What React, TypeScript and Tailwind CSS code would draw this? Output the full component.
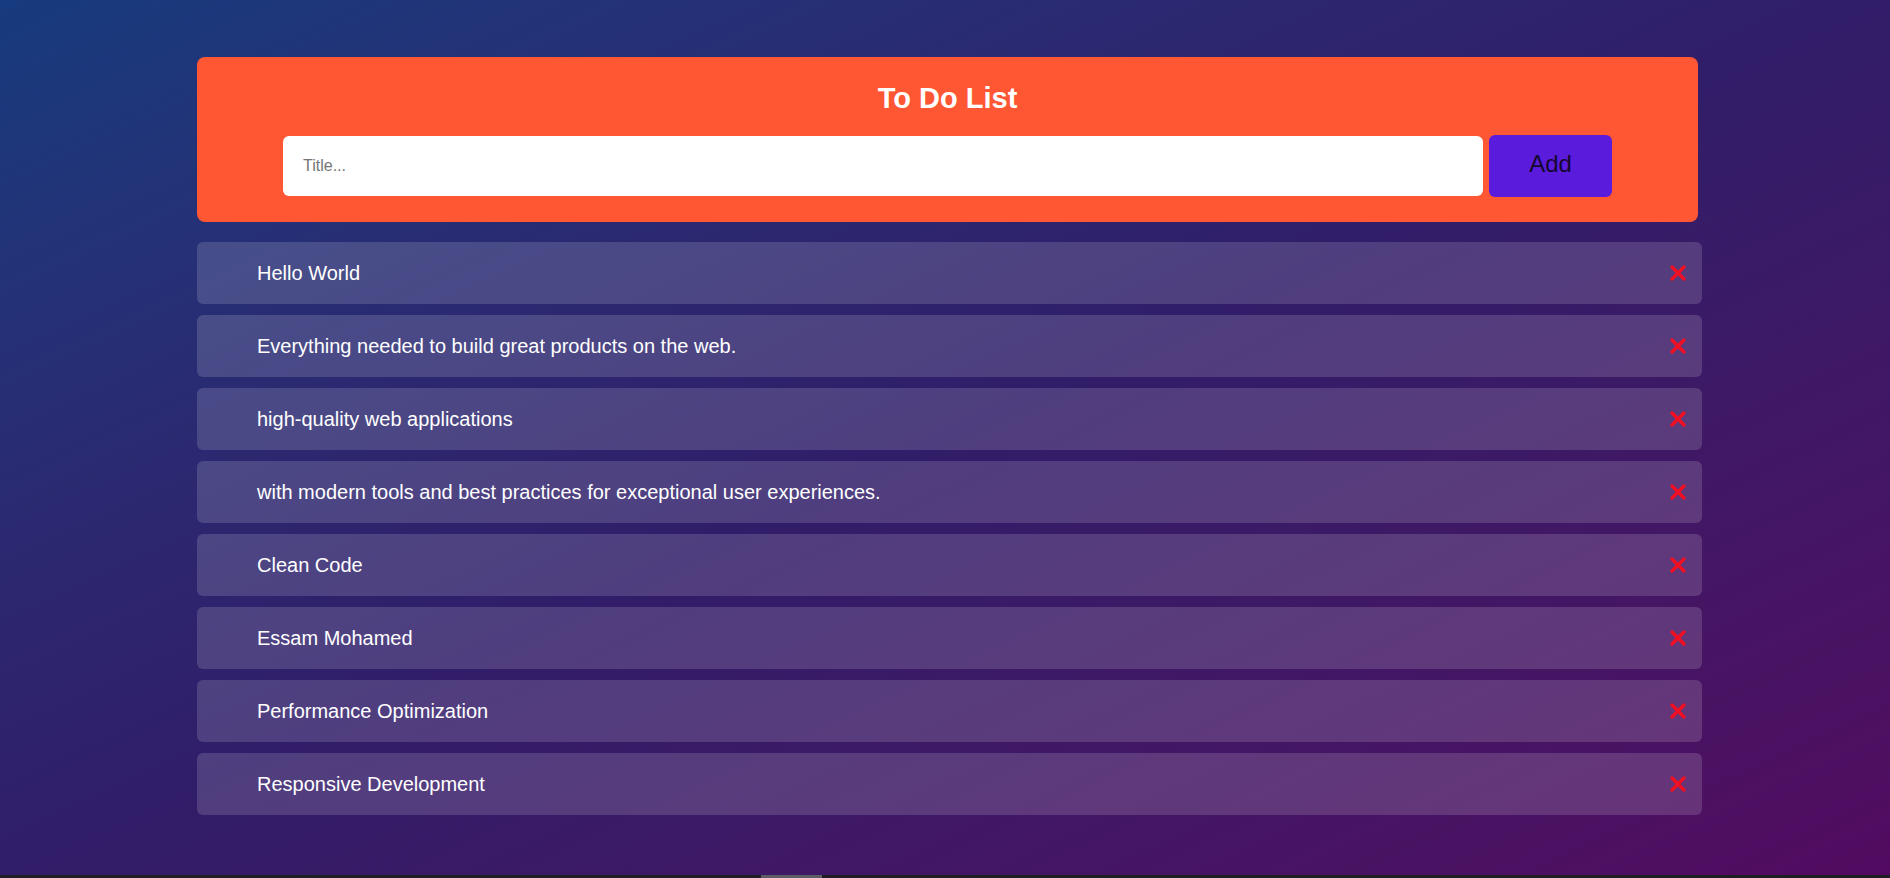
import { useState } from 'react'

const initialTodos = [
  'Hello World',
  'Everything needed to build great products on the web.',
  'high-quality web applications',
  'with modern tools and best practices for exceptional user experiences.',
  'Clean Code',
  'Essam Mohamed',
  'Performance Optimization',
  'Responsive Development',
]

function CloseIcon() {
  return (
    <svg width="18" height="18" viewBox="0 0 18 18" className="text-[#f20f24]">
      <path d="M3 3 L15 15 M15 3 L3 15" stroke="currentColor" strokeWidth="3.4" strokeLinecap="round" />
    </svg>
  )
}

export default function App() {
  const [todos, setTodos] = useState<string[]>(initialTodos)
  const [title, setTitle] = useState('')

  const addTodo = () => {
    if (!title.trim()) return
    setTodos([...todos, title.trim()])
    setTitle('')
  }

  return (
    <div
      className="h-screen flex flex-col overflow-hidden bg-linear-to-br from-[#163b7e] via-[#311d69] to-[#520a60] text-white"
      style={{ fontFamily: '"Liberation Sans", Arial, sans-serif' }}
    >
      <div className="flex-1 pt-[57px] pl-[197px] pr-[192px]">
        <div className="w-[1501px] h-[165px] rounded-[8px] bg-[#ff5733] flex flex-col items-center pt-[24px]">
          <h1 className="text-[29px] leading-[34px] font-bold text-white">To Do List</h1>
          <div className="mt-[20px] flex items-center gap-[6px]">
            <input
              value={title}
              onChange={(e) => setTitle(e.target.value)}
              placeholder="Title..."
              className="w-[1200px] h-[60px] rounded-[6px] bg-white px-[20px] text-[16px] text-black placeholder:text-[#757575] outline-none"
            />
            <button
              onClick={addTodo}
              className="w-[123px] h-[62px] rounded-[6px] bg-[#5a1bdd] pb-[4px] text-[24px] text-[#14082e]"
            >
              Add
            </button>
          </div>
        </div>

        <ul className="mt-[20px] w-[1505px] flex flex-col gap-[11px]">
          {todos.map((todo, i) => (
            <li
              key={i}
              className="h-[62px] rounded-[6px] bg-white/15 flex items-center justify-between pl-[60px] pr-[15px]"
            >
              <span className="text-[20px] text-white">{todo}</span>
              <button onClick={() => setTodos(todos.filter((_, j) => j !== i))}>
                <CloseIcon />
              </button>
            </li>
          ))}
        </ul>
      </div>
      <div className="h-[3px] bg-[#1e1e24] flex">
        <div className="ml-[761px] w-[61px] bg-[#5c5c66]" />
      </div>
    </div>
  )
}
